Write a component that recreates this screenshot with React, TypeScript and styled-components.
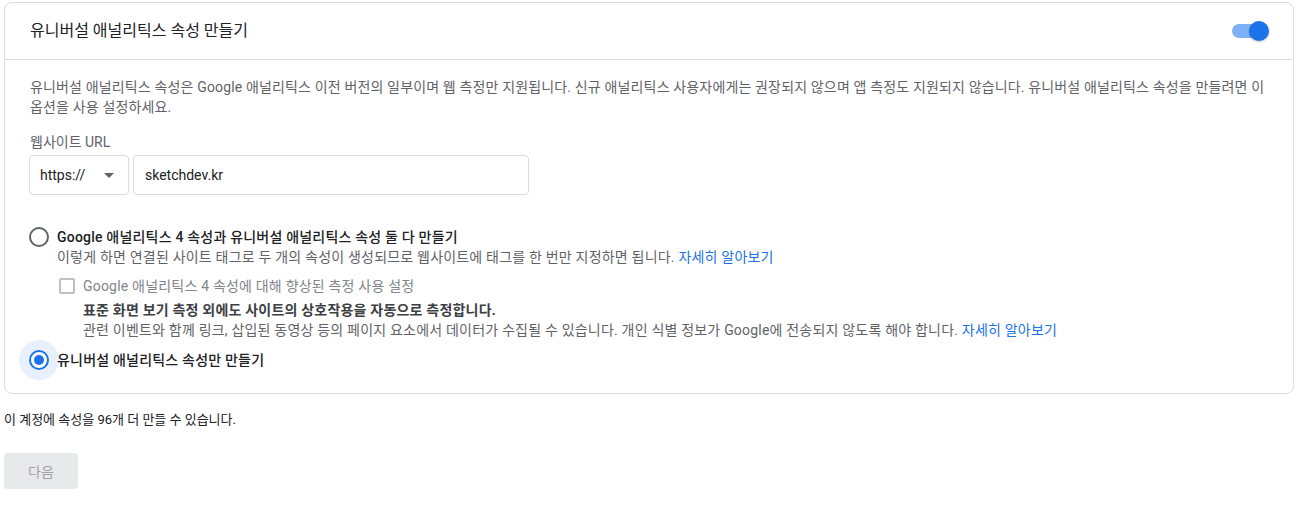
import React from "react";
import styled, { createGlobalStyle } from "styled-components";

const Global = createGlobalStyle`
  html, body { margin: 0; padding: 0; background: #fff; }
  body { font-family: Roboto, "Noto Sans CJK KR", sans-serif; color: #202124; }
  * { box-sizing: border-box; }
`;

const Page = styled.div`
  padding: 2px 18px 0 4px;
`;

const Card = styled.section`
  border: 1px solid #dadce0;
  border-radius: 8px;
  background: #fff;
`;

const Header = styled.header`
  height: 57px;
  display: flex;
  align-items: center;
  justify-content: space-between;
  padding: 0 24px 0 25px;
  border-bottom: 1px solid #dadce0;
`;

const Title = styled.h2`
  margin: 0;
  font-size: 16px;
  font-weight: 400;
  color: #202124;
  line-height: 24px;
`;

const Switch = styled.span`
  position: relative;
  display: inline-block;
  width: 34px;
  height: 14px;
  border-radius: 7px;
  background: #7fb0f5;
  margin-right: 3px;
  &::after {
    content: "";
    position: absolute;
    right: -3px;
    top: -3px;
    width: 20px;
    height: 20px;
    border-radius: 50%;
    background: #1a73e8;
    box-shadow: 0 1px 2px rgba(0, 0, 0, 0.25);
  }
`;

const Body = styled.div`
  padding: 17px 24px 23px 25px;
  font-size: 14px;
  line-height: 20px;
  color: #5f6368;
`;

const Para = styled.p`
  margin: 0;
  word-break: keep-all;
  letter-spacing: 0.15px;
`;

const FieldLabel = styled.div`
  margin-top: 15px;
  font-size: 14px;
  line-height: 20px;
  color: #5f6368;
`;

const InputRow = styled.div`
  display: flex;
  gap: 4px;
  margin-top: 3px;
  margin-left: -1px;
`;

const Select = styled.div`
  width: 100px;
  height: 40px;
  border: 1px solid #dadce0;
  border-radius: 4px;
  display: flex;
  align-items: center;
  justify-content: space-between;
  padding: 0 14px 0 10px;
  font-size: 14px;
  color: #202124;
`;

const Caret = styled.span`
  width: 0;
  height: 0;
  border-left: 5px solid transparent;
  border-right: 5px solid transparent;
  border-top: 5px solid #5f6368;
`;

const TextInput = styled.div`
  width: 396px;
  height: 40px;
  border: 1px solid #dadce0;
  border-radius: 4px;
  display: flex;
  align-items: center;
  padding: 0 11px;
  font-size: 14px;
  color: #202124;
`;

const Option = styled.div<{ $top: number }>`
  display: flex;
  align-items: flex-start;
  gap: 8px;
  margin-top: ${(p) => p.$top}px;
  margin-left: -1px;
  letter-spacing: 0.2px;
`;

const Radio = styled.span<{ $checked?: boolean }>`
  flex: none;
  width: 20px;
  height: 20px;
  border-radius: 50%;
  border: 2px solid ${(p) => (p.$checked ? "#1a73e8" : "#5f6368")};
  display: flex;
  align-items: center;
  justify-content: center;
  box-shadow: ${(p) => (p.$checked ? "0 0 0 10px #e8f0fe" : "none")};
  &::after {
    content: "";
    width: 10px;
    height: 10px;
    border-radius: 50%;
    background: ${(p) => (p.$checked ? "#1a73e8" : "transparent")};
  }
`;

const OptionContent = styled.div`
  display: flex;
  flex-direction: column;
`;

const OptionLabel = styled.div`
  font-weight: 500;
  color: #202124;
  font-size: 14px;
  line-height: 20px;
`;

const Sub = styled.div`
  color: #5f6368;
`;

const Link = styled.a`
  color: #1a73e8;
  text-decoration: none;
`;

const CheckRow = styled.div`
  display: flex;
  align-items: center;
  gap: 8px;
  margin-top: 9px;
  margin-left: 2px;
  color: #80868b;
`;

const Checkbox = styled.span`
  flex: none;
  width: 16px;
  height: 16px;
  border: 2px solid #bdc1c6;
  border-radius: 2px;
`;

const Detail = styled.div`
  margin-left: 26px;
  margin-top: 4px;
`;

const DetailTitle = styled.div`
  font-weight: 700;
  color: #3c4043;
`;

const Footer = styled.div`
  margin-top: 16px;
  font-size: 13px;
  line-height: 20px;
  color: #202124;
`;

const NextButton = styled.button`
  margin-top: 23px;
  width: 74px;
  height: 36px;
  border: none;
  border-radius: 4px;
  background: #e8e9ea;
  color: #a0a3a6;
  font-family: Roboto, "Noto Sans CJK KR", sans-serif;
  font-size: 14px;
`;

export default function App() {
  return (
    <Page>
      <Global />
      <Card>
        <Header>
          <Title>유니버설 애널리틱스 속성 만들기</Title>
          <Switch />
        </Header>
        <Body>
          <Para>
            유니버설 애널리틱스 속성은 Google 애널리틱스 이전 버전의 일부이며 웹 측정만 지원됩니다. 신규 애널리틱스
            사용자에게는 권장되지 않으며 앱 측정도 지원되지 않습니다. 유니버설 애널리틱스 속성을 만들려면 이 옵션을 사용
            설정하세요.
          </Para>
          <FieldLabel>웹사이트 URL</FieldLabel>
          <InputRow>
            <Select>
              <span>https://</span>
              <Caret />
            </Select>
            <TextInput>sketchdev.kr</TextInput>
          </InputRow>
          <Option $top={32}>
            <Radio />
            <OptionContent>
              <OptionLabel>Google 애널리틱스 4 속성과 유니버설 애널리틱스 속성 둘 다 만들기</OptionLabel>
              <Sub>
                이렇게 하면 연결된 사이트 태그로 두 개의 속성이 생성되므로 웹사이트에 태그를 한 번만 지정하면 됩니다.{" "}
                <Link>자세히 알아보기</Link>
              </Sub>
              <CheckRow>
                <Checkbox />
                <span>Google 애널리틱스 4 속성에 대해 향상된 측정 사용 설정</span>
              </CheckRow>
              <Detail>
                <DetailTitle>표준 화면 보기 측정 외에도 사이트의 상호작용을 자동으로 측정합니다.</DetailTitle>
                <Sub>
                  관련 이벤트와 함께 링크, 삽입된 동영상 등의 페이지 요소에서 데이터가 수집될 수 있습니다. 개인 식별
                  정보가 Google에 전송되지 않도록 해야 합니다. <Link>자세히 알아보기</Link>
                </Sub>
              </Detail>
            </OptionContent>
          </Option>
          <Option $top={10}>
            <Radio $checked />
            <OptionContent>
              <OptionLabel>유니버설 애널리틱스 속성만 만들기</OptionLabel>
            </OptionContent>
          </Option>
        </Body>
      </Card>
      <Footer>이 계정에 속성을 96개 더 만들 수 있습니다.</Footer>
      <NextButton>다음</NextButton>
    </Page>
  );
}
